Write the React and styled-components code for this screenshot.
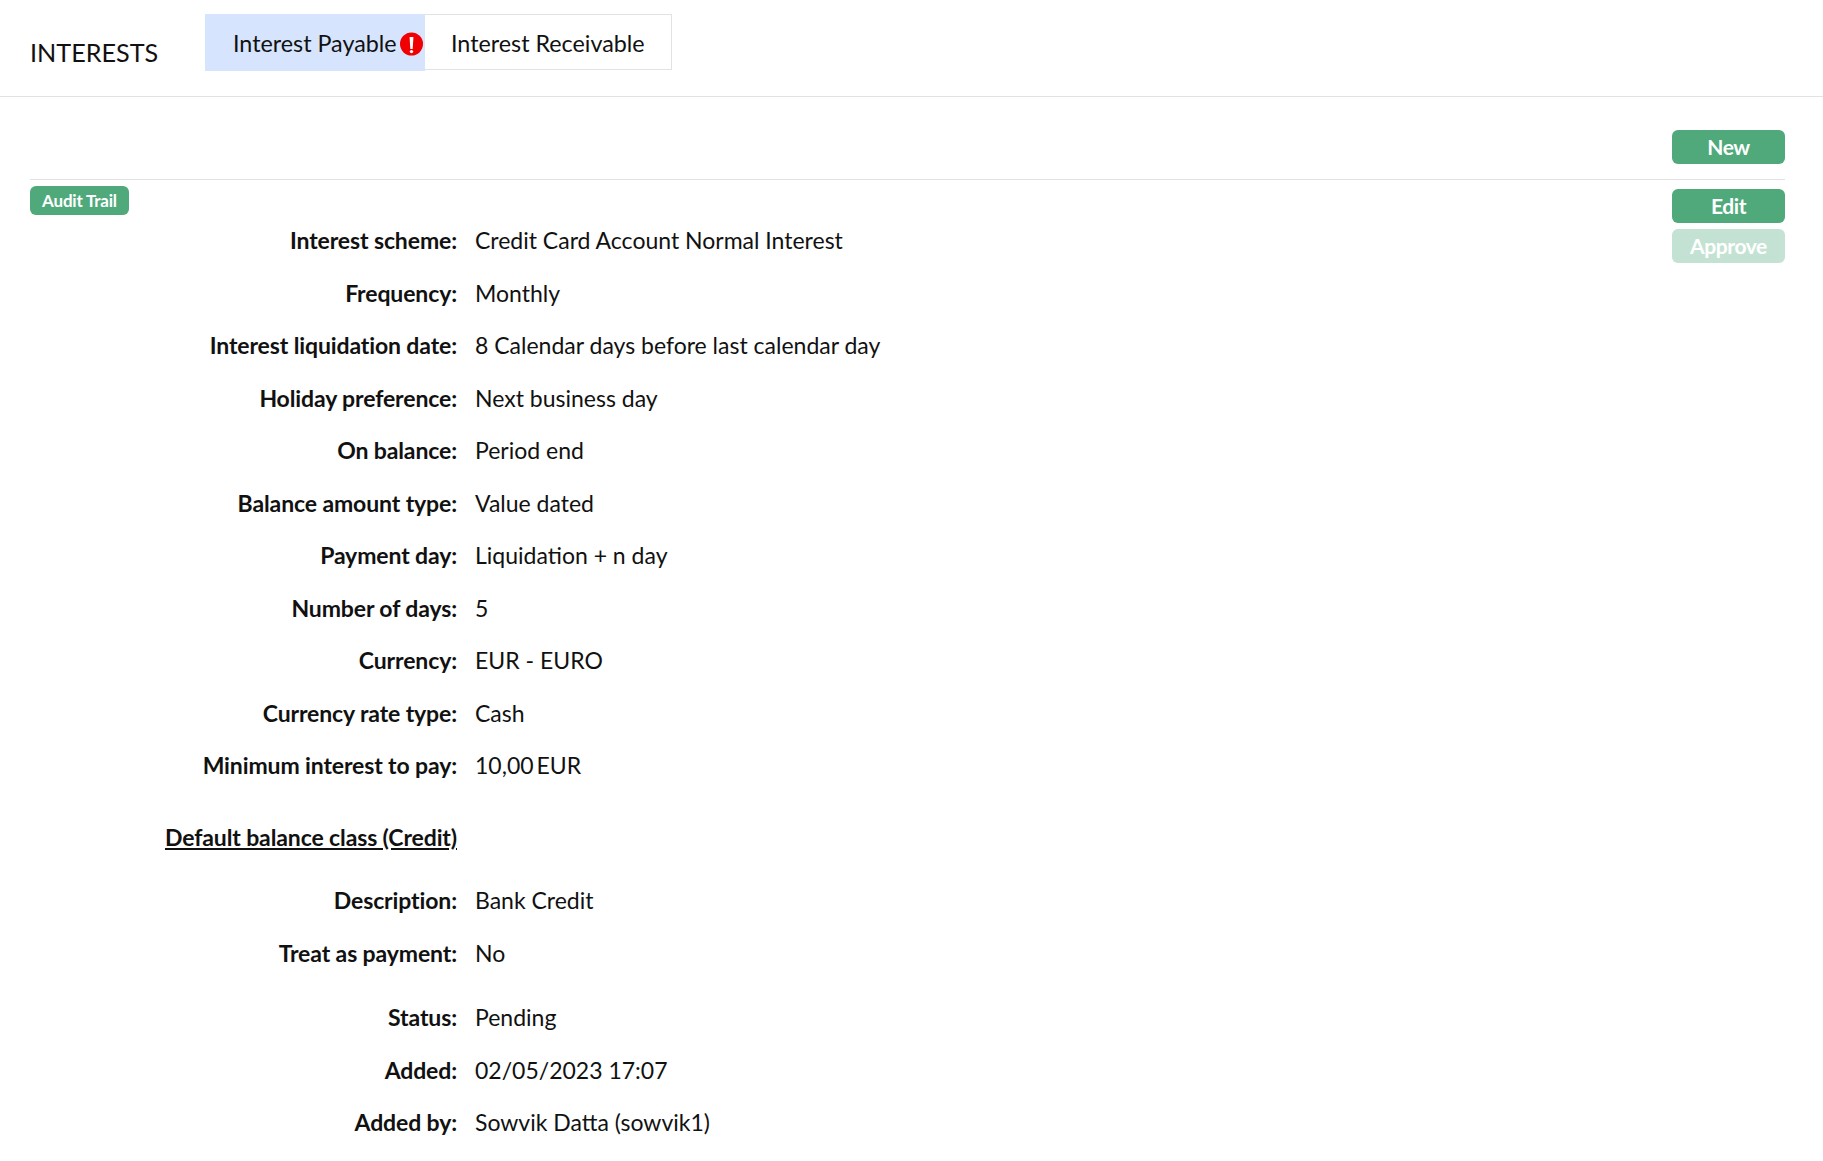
import React from "react";
import styled, { createGlobalStyle } from "styled-components";

const GlobalStyle = createGlobalStyle`
  html, body { margin: 0; padding: 0; background: #fff; }
  body { font-family: Lato, "Noto Sans", sans-serif; color: #111; }
`;

const Page = styled.div`
  width: 1823px;
  height: 1161px;
  overflow: hidden;
`;

const Header = styled.header`
  display: flex;
  height: 96px;
  padding-left: 30px;
  border-bottom: 1px solid #e2e2e2;
`;

const Title = styled.h1`
  flex: 0 0 175px;
  margin: 36px 0 0;
  font-size: 25.2px;
  line-height: 32px;
  font-weight: 400;
`;

const Tabs = styled.div`
  display: flex;
  align-items: flex-start;
  margin-top: 14px;
`;

const Tab = styled.div`
  display: flex;
  align-items: center;
  box-sizing: border-box;
  gap: 3px;
  height: ${(p) => (p.$active ? "57px" : "56px")};
  width: ${(p) => (p.$active ? "220px" : "247px")};
  padding-left: ${(p) => (p.$active ? "27px" : "26px")};
  padding-top: ${(p) => (p.$active ? "0" : "1px")};
  background: ${(p) => (p.$active ? "#d6e4fd" : "#fff")};
  border: 1px solid ${(p) => (p.$active ? "#d6e4fd" : "#e2e2e2")};
  border-left-width: ${(p) => (p.$active ? "1px" : "0")};
  font-size: 23.3px;
`;

const AlertSvg = styled.svg`
  flex: none;
  margin-top: 3px;
`;

const Toolbar = styled.div`
  display: flex;
  justify-content: flex-end;
  margin: 0 38px 0 30px;
  padding: 33px 0 15px;
  border-bottom: 1px solid #e2e2e2;
`;

const Button = styled.button`
  display: block;
  width: 113px;
  height: 34px;
  padding: 0;
  border: 0;
  border-radius: 6px;
  background: #4fa97b;
  opacity: ${(p) => (p.disabled ? 0.33 : 1)};
  color: #fff;
  font-family: inherit;
  font-size: 21px;
  font-weight: 700;
  letter-spacing: -0.4px;
  line-height: 34px;
`;

const Content = styled.div`
  display: flex;
  justify-content: space-between;
  margin: 0 38px 0 30px;
`;

const Main = styled.main`
  padding-top: 6px;
`;

const Audit = styled.span`
  display: block;
  width: 99px;
  height: 29px;
  border-radius: 6px;
  background: #4fa97b;
  color: #fff;
  font-size: 17px;
  font-weight: 700;
  letter-spacing: -0.2px;
  line-height: 29px;
  text-align: center;
`;

const Fields = styled.dl`
  display: grid;
  grid-template-columns: 427px 1fr;
  column-gap: 18px;
  margin: -1px 0 0;
`;

const Label = styled.dt`
  text-align: right;
  font-size: 23px;
  font-weight: 700;
  letter-spacing: -0.12px;
  line-height: 52.5px;
  text-decoration: ${(p) => (p.$head ? "underline" : "none")};
`;

const Value = styled.dd`
  margin: 0;
  font-size: 23px;
  line-height: 52.5px;
`;

const Actions = styled.div`
  display: flex;
  flex-direction: column;
  gap: 6px;
  padding-top: 9px;
`;

const Spacer = styled.div`
  grid-column: 1 / -1;
  height: ${(p) => p.$h}px;
`;

const rows1 = [
  ["Interest scheme:", "Credit Card Account Normal Interest"],
  ["Frequency:", "Monthly"],
  ["Interest liquidation date:", "8 Calendar days before last calendar day"],
  ["Holiday preference:", "Next business day"],
  ["On balance:", "Period end"],
  ["Balance amount type:", "Value dated"],
  ["Payment day:", "Liquidation + n day"],
  ["Number of days:", "5"],
  ["Currency:", "EUR - EURO"],
  ["Currency rate type:", "Cash"],
  ["Minimum interest to pay:", "10,00\u2009EUR"],
];
const rows2 = [
  ["Description:", "Bank Credit"],
  ["Treat as payment:", "No"],
];
const rows3 = [
  ["Status:", "Pending"],
  ["Added:", "02/05/2023 17:07"],
  ["Added by:", "Sowvik Datta (sowvik1)"],
];

function AlertIcon() {
  return (
    <AlertSvg width="23" height="24" viewBox="0 0 23 24">
      <circle cx="11.5" cy="12" r="11.5" fill="#f00000" />
      <path d="M9.6 5h3.8l-.7 12h-2.4z" fill="#fff" />
      <circle cx="11.5" cy="19.6" r="1.7" fill="#fff" />
    </AlertSvg>
  );
}

function Rows({ items }) {
  return items.map(([k, v]) => (
    <React.Fragment key={k}>
      <Label>{k}</Label>
      <Value>{v}</Value>
    </React.Fragment>
  ));
}

export default function App() {
  return (
    <Page>
      <GlobalStyle />
      <Header>
        <Title>INTERESTS</Title>
        <Tabs>
          <Tab $active>
            Interest Payable
            <AlertIcon />
          </Tab>
          <Tab>Interest Receivable</Tab>
        </Tabs>
      </Header>
      <Toolbar>
        <Button>New</Button>
      </Toolbar>
      <Content>
        <Main>
          <Audit>Audit Trail</Audit>
          <Fields>
            <Rows items={rows1} />
            <Spacer $h={19} />
            <Label $head>Default balance class (Credit)</Label>
            <Value />
            <Spacer $h={11} />
            <Rows items={rows2} />
            <Spacer $h={12} />
            <Rows items={rows3} />
          </Fields>
        </Main>
        <Actions>
          <Button>Edit</Button>
          <Button disabled>Approve</Button>
        </Actions>
      </Content>
    </Page>
  );
}
